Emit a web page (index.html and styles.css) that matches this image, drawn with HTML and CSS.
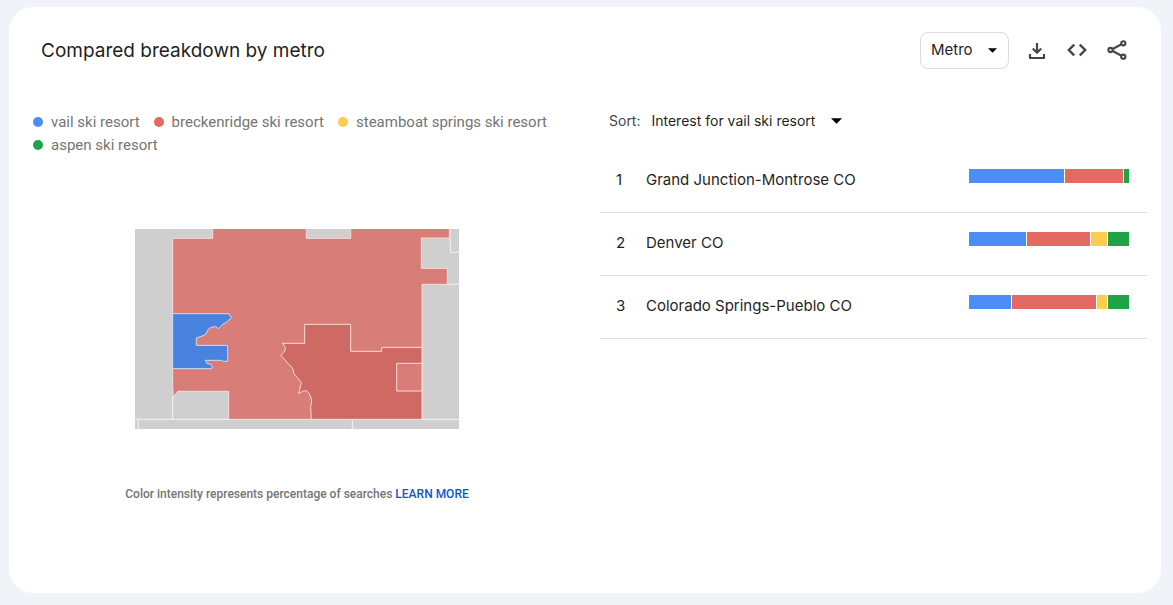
FILE: index.html
```html
<!DOCTYPE html>
<html lang="en">
<head>
<meta charset="utf-8">
<meta name="viewport" content="width=device-width, initial-scale=1">
<title>Compared breakdown by metro</title>
<link rel="stylesheet" href="styles.css">
</head>
<body>
<main class="card">
  <header class="card-header">
    <h1 class="title">Compared breakdown by metro</h1>
    <div class="picker resolution">
      <select class="picker-select" aria-label="Resolution"><option>Metro</option></select>
      <svg class="caret" viewBox="0 0 10 5" aria-hidden="true"><path d="M0 0h10L5 5z"/></svg>
    </div>
    <div class="actions">
      <button class="icon-button" type="button" aria-label="Download CSV">
        <svg viewBox="0 0 20 20" fill="none" stroke="currentColor" stroke-width="2.200"><path d="M10 3v9.500M5.800 8.500 10 12.700l4.200-4.200M3 14v4h14v-4" stroke-linejoin="round"/></svg>
      </button>
      <button class="icon-button" type="button" aria-label="Embed">
        <svg viewBox="0 0 20 20" fill="none" stroke="currentColor" stroke-width="2.400"><path d="M7.200 4.600 1.800 10l5.400 5.400M12.800 4.600l5.400 5.400-5.400 5.400"/></svg>
      </button>
      <button class="icon-button" type="button" aria-label="Share">
        <svg viewBox="0 0 20 20" fill="none" stroke="currentColor" stroke-width="2.100"><path d="M5.700 9 14.500 4.300M5.700 11l8.800 4.700"/><circle cx="3.500" cy="10" r="2.100"/><circle cx="16.300" cy="3.300" r="2.100"/><circle cx="16.300" cy="16.700" r="2.100"/></svg>
      </button>
    </div>
  </header>
  <div class="content">
    <section class="map-panel">
      <ul class="legend">
        <li class="legend-item"><span class="dot blue"></span>vail ski resort</li>
        <li class="legend-item"><span class="dot red"></span>breckenridge ski resort</li>
        <li class="legend-item"><span class="dot yellow"></span>steamboat springs ski resort</li>
        <li class="legend-item"><span class="dot green"></span>aspen ski resort</li>
      </ul>
      <svg class="map" viewBox="30 27 972 600" role="img" aria-label="Map of Colorado metros">
        <rect class="area-none" x="30" y="27" width="972" height="600"/>
        <path class="border" d="M30 598H1002M40 598v29M682 598v29M143 530v68M974 27l3 70h25M967 193h35"/>
        <path class="area area-light" d="M263 20H544V55H677V20H973V54H889V145H967V193H891V598H311V514H158L145 532L143 500V55H263Z"/>
        <path class="area area-dark" d="M472 370L479 378L481 386L478 396L467 406L480 420L495 437L502 443L508 463L525 482L529 488L521 521L535 513L543 512L551 518L557 530L560 545L557 560L559 598H891V382H770V394H677V313H539V370Z"/>
        <path class="area area-light" d="M815 430h76v83h-76z"/>
        <path class="area area-blue" d="M143 281H312L315 288L320 293L306 305L292 314L281 326L272 320L258 322L250 328L240 345L214 354V376H308V424H293L291 421H241L245 430L258 433L262 441L260 446H143Z"/>
      </svg>
      <p class="caption">Color intensity represents percentage of searches <a class="learn" href="#">LEARN MORE</a></p>
    </section>
    <section class="ranking">
      <div class="sort">
        <label class="sort-label" for="sort">Sort:</label>
        <div class="picker">
          <select class="picker-select" id="sort"><option>Interest for vail ski resort</option></select>
          <svg class="caret" viewBox="0 0 10 5" aria-hidden="true"><path d="M0 0h10L5 5z"/></svg>
        </div>
      </div>
      <ol class="rows">
        <li class="row"><span class="rank">1</span><span class="name">Grand Junction-Montrose CO</span>
          <div class="bar"><span class="blue" style="flex-grow:95"></span><span class="red" style="flex-grow:58"></span><span class="green" style="flex-grow:5"></span></div></li>
        <li class="row"><span class="rank">2</span><span class="name">Denver CO</span>
          <div class="bar"><span class="blue" style="flex-grow:57"></span><span class="red" style="flex-grow:63"></span><span class="yellow" style="flex-grow:16"></span><span class="green" style="flex-grow:21"></span></div></li>
        <li class="row"><span class="rank">3</span><span class="name">Colorado Springs-Pueblo CO</span>
          <div class="bar"><span class="blue" style="flex-grow:42"></span><span class="red" style="flex-grow:84"></span><span class="yellow" style="flex-grow:10"></span><span class="green" style="flex-grow:21"></span></div></li>
      </ol>
    </section>
  </div>
</main>
</body>
</html>
```
FILE: styles.css
```css
* { box-sizing: border-box; }
body {
  margin: 0;
  min-height: 100vh;
  padding: 7px 12px 12px 9px;
  display: flex;
  background: #f0f4f9;
  color: #1f1f1f;
  font: 15px/24px Inter, Lato, sans-serif;
}
.card {
  flex: 1;
  border-radius: 24px;
  background: #fff;
}
.card-header {
  display: flex;
  align-items: center;
  padding: 25px 34px 0 32px;
}
.title {
  margin: 0;
  flex: 1;
  font-size: 19px;
  line-height: 29px;
  font-weight: 400;
}
.picker { display: grid; align-items: center; }
.picker-select {
  grid-area: 1 / 1;
  appearance: none;
  border: 0;
  margin: 0;
  padding: 0 27px 0 0;
  background: transparent;
  color: inherit;
  font: inherit;
}
.caret {
  grid-area: 1 / 1;
  justify-self: end;
  width: 11px;
  height: 6px;
  pointer-events: none;
}
.resolution .picker-select {
  width: 89px;
  height: 37px;
  padding: 0 28px 2px 10px;
  border: 1px solid #dadce0;
  border-radius: 8px;
}
.resolution .caret { width: 9px; height: 5px; margin-right: 12px; }
.actions { display: flex; gap: 20px; margin-left: 18px; padding-bottom: 1px; }
.icon-button {
  width: 20px;
  height: 20px;
  padding: 0;
  border: 0;
  background: none;
  color: #444746;
}
.icon-button svg { display: block; }
.content { display: grid; grid-template-columns: 1fr 1fr; }
.map-panel {
  display: flex;
  flex-direction: column;
  align-items: center;
  padding: 42px 24px 0;
}
.legend {
  align-self: stretch;
  display: flex;
  flex-wrap: wrap;
  column-gap: 14px;
  margin: 0;
  padding: 0;
  list-style: none;
  color: #757575;
  font: 15px/23px Roboto, sans-serif;
}
.legend-item { display: flex; align-items: center; gap: 8px; }
.dot { width: 10px; height: 10px; margin-bottom: 1px; border-radius: 50%; }
.blue { background: #4c8df6; }
.red { background: #e46962; }
.yellow { background: #f8cd50; }
.green { background: #1ea446; }
.map { width: 324px; max-width: 100%; margin-top: 72px; }
.area-none { fill: #cfcfcf; }
.border { fill: none; stroke: #f3f3f3; stroke-width: 3; }
.area { stroke: #f5dcda; stroke-width: 3; }
.area-light { fill: #d97d78; }
.area-dark { fill: #cf6964; }
.area-blue { fill: #4983e0; stroke: #cddcf5; }
.caption {
  margin: 55px 0 0;
  color: #757575;
  font: 500 12px/20px Roboto, sans-serif;
}
.learn { color: #0b57d0; text-decoration: none; }
.ranking { padding: 40px 14px 0 15px; }
.sort { display: flex; align-items: center; gap: 11px; padding-left: 9px; font-size: 14px; }
.sort-label { color: #444746; }
.rows { margin: 17px 0 0; padding: 0; list-style: none; }
.row {
  display: flex;
  align-items: flex-start;
  padding: 18px 18px 20px 16px;
  border-bottom: 1px solid #e0e0e0;
}
.rank { width: 30px; }
.name { flex: 1; }
.bar { display: flex; gap: 1px; width: 160px; height: 14px; margin-top: 1px; }
.bar span { flex-basis: 0; }
```
